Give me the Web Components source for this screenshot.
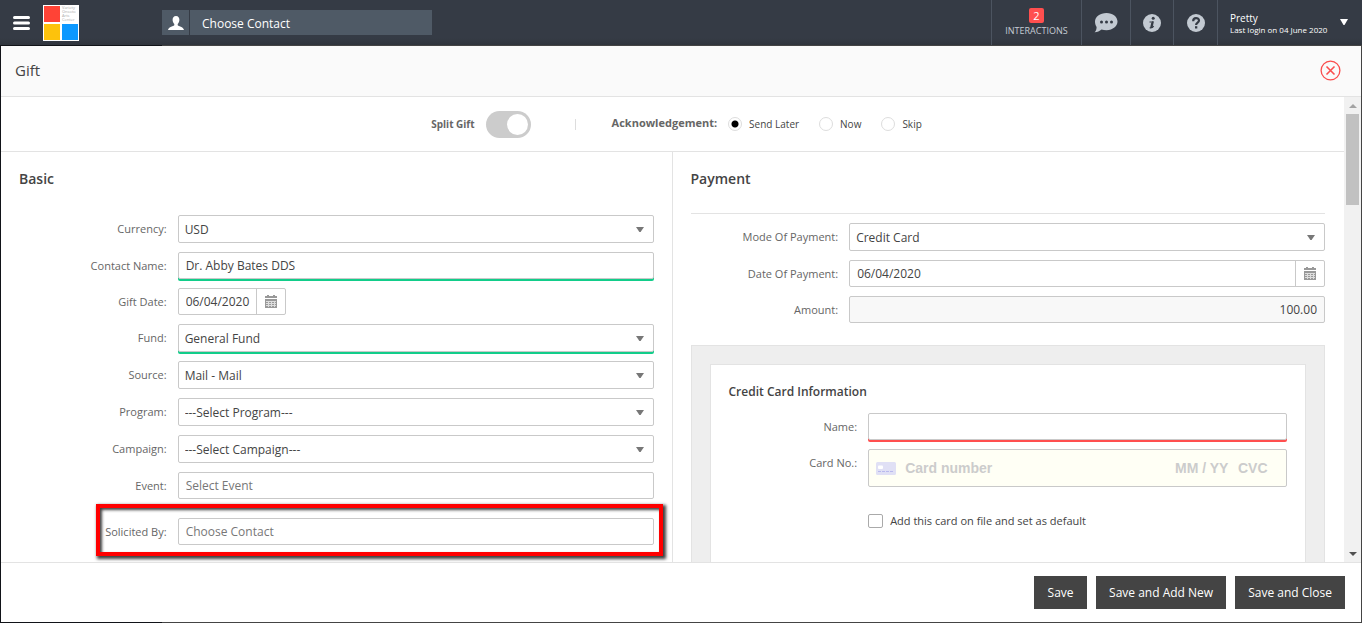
<!DOCTYPE html>
<html lang="en">
<head>
<meta charset="utf-8">
<meta name="viewport" content="width=device-width, initial-scale=1">
<title>Gift</title>
<style>
  html, body { height: 100%; margin: 0; }
  body {
    background: #444;
    color: #444;
    font: 12px/18px "Open Sans", "Noto Sans", sans-serif;
    overflow: hidden;
  }
</style>
</head>
<body>
<gift-app></gift-app>

<script>
const RESET = `
  *, *::before, *::after { box-sizing: border-box; }
  button, input, select { font: inherit; color: inherit; margin: 0; border-radius: 0; }
  button { padding: 0; border: 0; background: none; cursor: pointer; }
  svg { display: block; }
`;

const FIELD = `
  :host { display: grid; grid-template-columns: 25% 75%; align-items: start; position: relative; }
  label { padding-right: 11px; text-align: right; font-size: 11px; line-height: 27px; color: #666; }
  .box {
    display: flex; min-width: 0; height: 27px; background: #fff;
    border: 1px solid #c9c9c9; border-radius: 2px;
  }
  input, select {
    flex: 1; width: 100%; min-width: 0; height: 100%; padding: 0 7px; border: 0; outline: 0;
    background: transparent; color: #444; appearance: none;
  }
  input::placeholder { color: #777; opacity: 1; }
  :host([state="valid"]) .box { box-shadow: 0 2px 0 #12cd8a; }
  :host([state="required"]) .box { box-shadow: 0 2px 0 #ff4f4f; }
`;

const CALENDAR = `<svg width="12" height="13" viewBox="0 0 12 13" shape-rendering="crispEdges" aria-hidden="true">
  <path fill="#999" d="M0 1h2V0h2v1h4V0h2v1h2v2H0zM0 4h12v9H0z"/>
  <path stroke="#ddd" d="M1 6.500h10M1 8.500h10M1 10.500h10M3.500 6v6M6.500 6v6M9.500 6v6"/>
</svg>`;

class View extends HTMLElement {
  connectedCallback() {
    if (this.shadowRoot) return;
    this.attachShadow({ mode: "open" }).innerHTML =
      `<style>${RESET}${this.css()}</style>${this.html()}`;
  }
  attr(name) { return this.getAttribute(name) || ""; }
}

customElements.define("text-field", class extends View {
  css() {
    return FIELD + `
      :host([readonly]) .box { background: #f8f8f8; }
      :host([readonly]) input { text-align: right; }
    `;
  }
  html() {
    return `<label for="c">${this.attr("label")}</label>
      <div class="box"><input id="c" type="text" value="${this.attr("value")}"
        placeholder="${this.attr("placeholder")}" ${this.hasAttribute("readonly") ? "readonly" : ""}></div>
      <slot></slot>`;
  }
});

customElements.define("select-field", class extends View {
  css() {
    return FIELD + `
      label { line-height: 28px; }
      .box { display: grid; grid-template-columns: 1fr 26px; align-items: center; height: 28px; }
      select { grid-area: 1 / 1 / 2 / 3; padding: 1px 6px 0; }
      svg { grid-area: 1 / 2; justify-self: center; pointer-events: none; }
    `;
  }
  html() {
    return `<label for="c">${this.attr("label")}</label>
      <div class="box">
        <select id="c"><option>${this.attr("value")}</option></select>
        <svg width="8" height="5" viewBox="0 0 8 5" aria-hidden="true"><path fill="#777" d="M0 0h8L4.600 5H3.400z"/></svg>
      </div>`;
  }
});

customElements.define("date-field", class extends View {
  css() {
    return FIELD + `
      :host([compact]) .box { justify-self: start; width: 108px; }
      input { padding-right: 0; }
      button { flex: none; display: grid; place-items: center; width: 29px; border-left: 1px solid #c9c9c9; }
    `;
  }
  html() {
    return `<label for="c">${this.attr("label")}</label>
      <div class="box"><input id="c" type="text" value="${this.attr("value")}">
      <button type="button" aria-label="Open calendar">${CALENDAR}</button></div>`;
  }
});

customElements.define("card-field", class extends View {
  css() {
    return FIELD + `
      .box {
        align-items: center; height: 38px; padding: 0 11px 0 7px; background: #fffff5;
        font: bold 14px/18px "Liberation Sans", Arial, sans-serif;
      }
      input { flex: none; padding: 0; }
      input::placeholder { color: #ccc; }
      .number { flex: 1; margin-left: 9px; }
      .expiry { width: 63px; }
      .cvc { width: 37px; }
    `;
  }
  html() {
    return `<label for="c">${this.attr("label")}</label>
      <div class="box">
        <svg width="20" height="13" viewBox="0 0 20 13" aria-hidden="true">
          <rect width="20" height="13" rx="1.500" fill="#e0e0f5"/>
          <rect x="2" y="3.500" width="5" height="3.500" rx="1" fill="#fff"/>
          <path stroke="#b9b9ee" stroke-dasharray="3 1" d="M2 9.500h16"/>
        </svg>
        <input class="number" id="c" placeholder="Card number">
        <input class="expiry" aria-label="Expiry date" placeholder="MM / YY">
        <input class="cvc" aria-label="Security code" placeholder="CVC">
      </div>`;
  }
});

customElements.define("check-field", class extends View {
  css() {
    return `
      :host { display: flex; align-items: center; margin: 16px 0 0 25%; font-size: 11px; }
      input { appearance: none; width: 15px; height: 14px; border: 1px solid #aaa; border-radius: 2px; background: #fff; }
      input:checked { background: #444; }
      label { padding-left: 7px; }
    `;
  }
  html() { return `<input id="c" type="checkbox"><label for="c">${this.attr("label")}</label>`; }
});

customElements.define("callout-frame", class extends View {
  css() {
    return `
      :host {
        position: absolute; top: -14px; bottom: -11px; right: -9px; width: calc(75% + 91px);
        box-sizing: border-box; border: 4px solid #f00; pointer-events: none;
        box-shadow: 2px 2px 3px 1px rgba(0,0,0,.75), inset 2px 2px 3px rgba(0,0,0,.75);
      }
    `;
  }
  html() { return ""; }
});

customElements.define("form-panel", class extends View {
  css() {
    return `
      :host { display: block; padding: 17px 19px 0 18px; }
      h2 { margin: 0; font-size: 14px; line-height: 20px; font-weight: 600; }
      .rows { display: grid; gap: 9px; margin-top: 26px; }
      :host([ruled]) .rows { margin-top: 24px; padding-top: 9px; border-top: 1px solid #e3e3e3; }
      ::slotted([spaced]) { margin-top: 10px; }
    `;
  }
  html() { return `<h2>${this.attr("heading")}</h2><div class="rows"><slot></slot></div>`; }
});

customElements.define("card-panel", class extends View {
  css() {
    return `
      :host { display: block; margin-top: 13px; padding: 18px; background: #eee; border: 1px solid #e3e3e3; }
      section { min-height: 280px; padding: 17px 18px; background: #fff; border: 1px solid #e3e3e3; }
      h3 { margin: 0; font-size: 12px; line-height: 20px; font-weight: 600; }
      .rows { display: grid; gap: 9px; margin-top: 11px; }
    `;
  }
  html() { return `<section><h3>${this.attr("heading")}</h3><div class="rows"><slot></slot></div></section>`; }
});

customElements.define("option-bar", class extends View {
  css() {
    return `
      :host {
        display: flex; flex: none; align-items: center; justify-content: center;
        height: 55px; padding-left: 8px; border-bottom: 1px solid #e3e3e3; color: #666; font-size: 10px;
      }
      .split { font-weight: bold; margin-right: 11px; }
      .toggle {
        appearance: none; display: flex; justify-content: flex-end; width: 45px; height: 27px; padding: 3px;
        border-radius: 14px; background: #ccc;
      }
      .toggle::before { content: ""; width: 21px; height: 21px; border-radius: 50%; background: #fff; }
      .line { width: 1px; height: 11px; margin: 0 36px 0 44px; background: #ddd; }
      fieldset { display: contents; }
      .title { padding-bottom: 2px; font-size: 11px; font-weight: bold; margin-right: 11px; }
      .radio { display: flex; align-items: center; gap: 7px; margin-right: 20px; color: #444; }
      .radio:last-child { margin-right: 0; }
      .radio input { appearance: none; width: 14px; height: 14px; border: 1px solid #ddd; border-radius: 50%; background: #fff; }
      .radio input:checked { background: radial-gradient(circle, #000 3px, #fff 4px); }
    `;
  }
  html() {
    return `<label class="split" for="split">Split Gift</label>
      <input class="toggle" id="split" type="checkbox" role="switch">
      <span class="line"></span>
      <fieldset aria-labelledby="ack">
        <span class="title" id="ack">Acknowledgement:</span>
        <label class="radio"><input type="radio" name="ack" checked>Send Later</label>
        <label class="radio"><input type="radio" name="ack">Now</label>
        <label class="radio"><input type="radio" name="ack">Skip</label>
      </fieldset>`;
  }
});

customElements.define("scroll-rail", class extends View {
  css() {
    return `
      :host { display: flex; flex-direction: column; width: 17px; background: #f1f1f1; }
      button { display: grid; place-items: center; height: 17px; }
      .track { flex: 1; padding: 0 2px; }
      .thumb { height: 21%; background: #c1c1c1; }
    `;
  }
  html() {
    return `<button type="button" aria-label="Scroll up"><svg width="8" height="4" viewBox="0 0 8 4"><path fill="#a3a3a3" d="M0 4l4-4 4 4z"/></svg></button>
      <div class="track"><div class="thumb"></div></div>
      <button type="button" aria-label="Scroll down"><svg width="8" height="4" viewBox="0 0 8 4"><path fill="#505050" d="M0 0l4 4 4-4z"/></svg></button>`;
  }
});

customElements.define("action-button", class extends View {
  css() {
    return `
      :host { display: block; }
      button { min-width: 53px; height: 33px; padding: 0 13px; background: #444; color: #fff; }
    `;
  }
  html() { return `<button type="button"><slot></slot></button>`; }
});

customElements.define("top-bar", class extends View {
  css() {
    return `
      :host {
        display: flex; flex: none; align-items: stretch; height: 45px; color: #fff;
        background: linear-gradient(#353b45 85%, #2f343c);
      }
      .start { display: flex; align-items: flex-start; width: 162px; padding-left: 13px; }
      .menu { margin: 15px 13px 0 0; }
      .logo { margin-top: 5px; }
      .search { display: flex; gap: 1px; width: 270px; height: 25px; margin-top: 10px; }
      .search button { display: grid; place-items: center; width: 27px; background: #4f5a66; }
      .search input { flex: 1; min-width: 0; padding: 2px 12px 0; border: 0; outline: 0; background: #4f5a66; }
      .search input::placeholder { color: #fff; opacity: 1; }
      nav { display: flex; margin-left: auto; }
      nav button { border-left: 1px solid #4c5460; display: grid; place-items: center; }
      .inter { width: 90px; padding-top: 8px; grid-template-rows: 15px 16px; align-content: start; color: #c6ccd4; font-size: 9px; line-height: 14px; }
      .inter b { width: 15px; border-radius: 2px; background: #ff4f4f; color: #fff; font-size: 11px; line-height: 15px; font-weight: normal; }
      .chat { width: 49px; }
      .info { width: 43px; }
      .help { width: 44px; }
      nav .user { width: 145px; grid-template-columns: 1fr 8px; padding: 2px 14px 0 12px; font-size: 10px; line-height: 12px; text-align: left; }
      .user span { justify-self: start; }
      .user small { display: block; font-size: 8px; white-space: nowrap; }
      .user svg { margin-bottom: 4px; }
    `;
  }
  html() {
    return `<div class="start">
        <button class="menu" type="button" aria-label="Menu"><svg width="17" height="16" viewBox="0 0 17 16"><path stroke="#fff" stroke-width="3" stroke-linecap="round" d="M1.500 2.500h14M1.500 8h14M1.500 13.500h14"/></svg></button>
        <svg class="logo" width="36" height="36" viewBox="0 0 36 36">
          <rect width="36" height="36" fill="#fff"/>
          <rect x="1" y="1" width="16" height="16" fill="#ff4336"/>
          <rect x="1" y="19" width="16" height="16" fill="#fdc20c"/>
          <rect x="19" y="19" width="16" height="16" fill="#0c98ff"/>
          <g fill="#aaa" font-size="4"><text x="19" y="4">Variety</text><text x="19" y="8">Onsoto</text><text x="19" y="12">Arts</text><text x="19" y="16">Center</text></g>
        </svg>
      </div>
      <div class="search">
        <button type="button" aria-label="Find contact"><svg width="16" height="14" viewBox="0 0 16 14"><path fill="#fff" d="M8 0c2.300 0 3.500 1.700 3.400 4-.1 1.700-.8 3.200-1.700 3.900v1.300c.4.900 5.800 1.500 6.300 4.800H0c.5-3.300 5.900-3.900 6.300-4.800V7.900C5.400 7.200 4.700 5.700 4.600 4 4.500 1.700 5.700 0 8 0z"/></svg></button>
        <input type="text" aria-label="Contact" placeholder="Choose Contact">
      </div>
      <nav>
        <button class="inter" type="button"><b>2</b><span>INTERACTIONS</span></button>
        <button class="chat" type="button" aria-label="Messages"><svg width="24" height="20" viewBox="0 0 24 20">
          <path fill="#c3cad2" d="M12.500 0C19 0 23.500 3.900 23.500 8.600s-4.500 8.600-11 8.600c-1.800 0-3.500-.3-5-.8C5.700 18 3 19.300.6 19.200c1.400-1.300 2-3 2-5.200C1.600 12.500 1 10.600 1 8.600 1 3.900 6 0 12.500 0z"/>
          <g fill="#353b45"><circle cx="7.500" cy="9" r="1.500"/><circle cx="12.500" cy="9" r="1.500"/><circle cx="17.500" cy="9" r="1.500"/></g></svg></button>
        <button class="info" type="button" aria-label="Information"><svg width="18" height="18" viewBox="0 0 18 18">
          <circle cx="9" cy="9" r="9" fill="#c3cad2"/><circle cx="10.200" cy="4.300" r="1.500" fill="#353b45"/>
          <path fill="none" stroke="#353b45" stroke-width="1.200" d="M6.500 8h1.800M6.700 13.700c1.400.4 2.800 0 4-1.500"/><path stroke="#353b45" stroke-width="2.300" d="M9.800 7.200L8.300 13.800"/></svg></button>
        <button class="help" type="button" aria-label="Help"><svg width="18" height="18" viewBox="0 0 18 18">
          <circle cx="9" cy="9" r="9" fill="#c3cad2"/><path fill="none" stroke="#353b45" stroke-width="2.200" d="M6.200 7.200C6 3.300 12 3.300 12 6.500c0 2.100-2.900 2-2.900 4.500"/><rect x="8" y="12.200" width="2.300" height="2.300" fill="#353b45"/></svg></button>
        <button class="user" type="button"><span>Pretty<small>Last login on 04 June 2020</small></span>
          <svg width="8" height="6" viewBox="0 0 8 6"><path fill="#fff" d="M0 0h8L4.500 6h-1z"/></svg></button>
      </nav>`;
  }
});

customElements.define("gift-dialog", class extends View {
  css() {
    return `
      :host { display: flex; flex-direction: column; min-height: 0; background: #fff; }
      header {
        display: flex; flex: none; align-items: center; justify-content: space-between;
        height: 51px; padding: 0 20px 2px 14px; background: #fafafa; border-bottom: 1px solid #e3e3e3;
      }
      h1 { margin: 0; font-size: 15px; line-height: 20px; font-weight: normal; }
      .body { display: grid; grid-template-columns: 1fr 17px; grid-template-rows: 100%; flex: 1; min-height: 0; }
      .content { min-width: 0; overflow: hidden; }
      .columns { display: grid; grid-template-columns: 1fr 1fr; }
      ::slotted(form-panel:first-child) { padding-right: 18px; border-right: 1px solid #e3e3e3; }
      footer {
        display: flex; flex: none; align-items: center; justify-content: flex-end; gap: 9px;
        height: 60px; padding-right: 16px; border-top: 1px solid #e3e3e3;
      }
    `;
  }
  html() {
    return `<header><h1>${this.attr("heading")}</h1>
        <button type="button" aria-label="Close"><svg width="21" height="21" viewBox="0 0 21 21"><g fill="none" stroke="#fa4d4d"><circle cx="10.500" cy="10.500" r="9.400" stroke-width="1.300"/><path stroke-width="1.600" d="M6.500 6.500l8 8M14.500 6.500l-8 8"/></g></svg></button>
      </header>
      <div class="body">
        <div class="content"><option-bar></option-bar><div class="columns"><slot></slot></div></div>
        <scroll-rail></scroll-rail>
      </div>
      <footer><slot name="actions"></slot></footer>`;
  }
});

customElements.define("gift-app", class extends View {
  css() {
    return `
      :host { display: flex; flex-direction: column; height: 100vh; background: linear-gradient(90deg, #111318 162px, #444 162px); }
      gift-dialog { flex: 1; margin: 1px; }
    `;
  }
  html() {
    return `<top-bar></top-bar>
      <gift-dialog heading="Gift">
        <form-panel heading="Basic">
          <select-field label="Currency:" value="USD"></select-field>
          <text-field label="Contact Name:" value="Dr. Abby Bates DDS" state="valid"></text-field>
          <date-field label="Gift Date:" value="06/04/2020" compact></date-field>
          <select-field label="Fund:" value="General Fund" state="valid"></select-field>
          <select-field label="Source:" value="Mail - Mail"></select-field>
          <select-field label="Program:" value="---Select Program---"></select-field>
          <select-field label="Campaign:" value="---Select Campaign---"></select-field>
          <text-field label="Event:" placeholder="Select Event"></text-field>
          <text-field label="Solicited By:" placeholder="Choose Contact" spaced><callout-frame></callout-frame></text-field>
        </form-panel>
        <form-panel heading="Payment" ruled>
          <select-field label="Mode Of Payment:" value="Credit Card"></select-field>
          <date-field label="Date Of Payment:" value="06/04/2020"></date-field>
          <text-field label="Amount:" value="100.00" readonly></text-field>
          <card-panel heading="Credit Card Information">
            <text-field label="Name:" state="required"></text-field>
            <card-field label="Card No.:"></card-field>
            <check-field label="Add this card on file and set as default"></check-field>
          </card-panel>
        </form-panel>
        <action-button slot="actions">Save</action-button>
        <action-button slot="actions">Save and Add New</action-button>
        <action-button slot="actions">Save and Close</action-button>
      </gift-dialog>`;
  }
});
</script>
</body>
</html>
